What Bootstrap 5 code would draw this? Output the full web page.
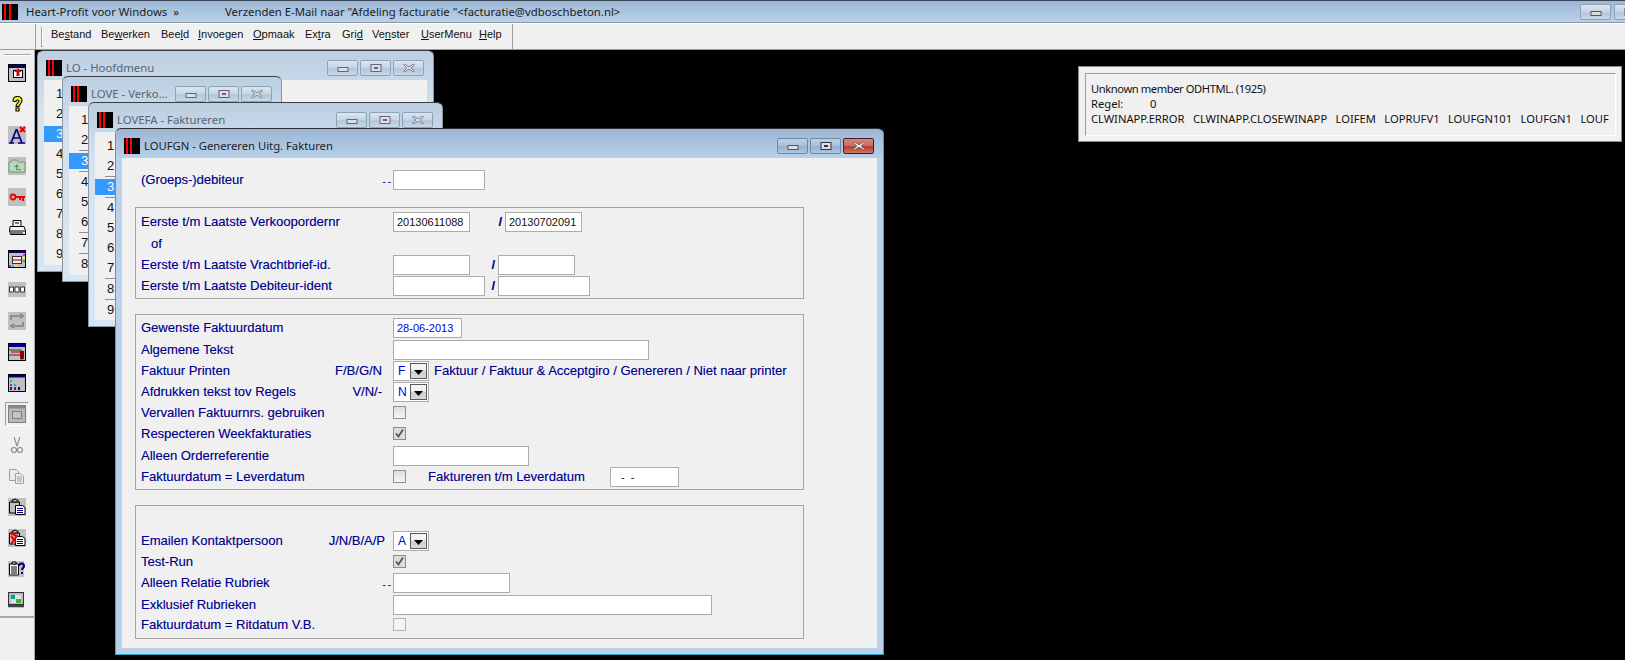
<!DOCTYPE html>
<html lang="nl">
<head>
<meta charset="utf-8">
<title>Heart-Profit voor Windows</title>
<link href="https://cdn.jsdelivr.net/npm/bootstrap@5.3.0/dist/css/bootstrap.min.css" rel="stylesheet">
<style>
html,body{height:660px;overflow:hidden;background:#000;}
body{font-family:"Liberation Sans",Arial,sans-serif;font-size:13px;line-height:20px;color:#00008f;}
.form-wrap{text-shadow:.3px 0 0 rgba(0,0,140,.35);}
.ui-seg{font-family:"Noto Sans","Open Sans",sans-serif;}
.app-bar{height:23px;background:linear-gradient(#9db8d6,#b9d1ea);border-top:1px solid #3c4654;border-bottom:1px solid #8c9aa8;color:#1c1c1c;font-size:11.35px;}
.app-logo{width:16px;height:16px;margin-left:2px;flex:none;}
.app-name{margin-left:8px;width:199px;white-space:nowrap;}
.app-btn{width:30px;height:17px;margin-right:3px;flex:none;}
.app-btn.cut{margin-right:-20px;}
.menu-row{height:27px;background:#f0f0f0;border-top:1px solid #fff;border-bottom:1px solid #9a9a9a;}
.menu-box{margin-left:35px;width:478px;border-left:1px solid #a0a0a0;border-right:1px solid #a0a0a0;padding-left:5px;}
.menu-grip{width:2px;height:20px;margin-top:3px;border-left:1px solid #a0a0a0;border-bottom:1px solid #a0a0a0;background:#fff;flex:none;}
.menu-grid{display:grid;grid-template-columns:50px 60px 37px 55px 52px 37px 30px 49px 58px 30px;margin-left:8px;color:#111;font-size:11px;line-height:20px;}
.work{height:610px;}
.tool{width:35px;background:#f0f0f0;border-right:1px solid #a8a8a8;height:610px;flex:none;}
.tool-in{height:568px;border-bottom:2px solid #a8a8a8;padding-top:4px;}
.tool-grip{height:2px;margin:0 3px 1px 4px;border-top:1px solid #a8a8a8;background:#fff;}
.tool-slot{height:31px;display:flex;align-items:center;padding-left:8px;}
.tool-slot svg{width:18px;height:18px;display:block;}
.tool-slot.pressed{padding-left:5px;}
.press{width:24px;height:24px;border:1px solid #9a9a9a;border-right-color:#fff;border-bottom-color:#fff;padding:2px;}
.desk{position:relative;flex-grow:1;background:#000;}
.mdi{position:absolute;display:flex;flex-direction:column;border:1px solid #8b96a3;border-top-color:#3a3f46;border-radius:6px 6px 0 0;background:linear-gradient(#bccee1 0,#d5e3f1 60px,#d8e5f2);padding:0 6px 6px;}
.mdi-lo{left:2px;top:0;width:397px;height:222px;}
.mdi-love{left:27px;top:26px;width:220px;height:206px;}
.mdi-fa{left:53px;top:52px;width:355px;height:225px;}
.mdi-gn{left:80px;top:78px;width:769px;height:527px;background:linear-gradient(#9cb7d4 0,#b9d1ea 30px,#b9d1ea);border-color:#6f8fae;border-top-color:#2c2f33;border-bottom-color:#2fa6c0;}
.mdi-head{height:29px;padding-top:5px;display:flex;align-items:center;flex:none;}
.mdi-logo{width:16px;height:16px;margin-left:2px;flex:none;}
.mdi-title{margin-left:4px;color:#566474;font-size:11.35px;white-space:nowrap;overflow:hidden;}
.mdi-gn .mdi-title{color:#1c1c1c;font-size:11.25px;}
.caps{margin-left:auto;display:flex;gap:2px;flex:none;margin-right:3px;}
.cap{width:31px;height:16px;border:1px solid #8ea3b8;border-radius:2px;background:linear-gradient(#dbe6f1 0,#c4d4e4 50%,#b2c6da 55%,#c8d8e8);display:flex;align-items:center;justify-content:center;}
.cap svg{width:14px;height:10px;display:block;}
.mdi-gn .cap{border-color:#6d88a6;background:linear-gradient(#bcd0e4 0,#a8c0da 50%,#94b0cf 55%,#aec8e2);}
.mdi-gn .cap.cl{border-color:#4a1a22;background:linear-gradient(#d6897d 0,#c8695c 50%,#b23a2c 55%,#d0766a);}
.pane{background:#f0f0f0;flex-grow:1;min-height:0;overflow:hidden;}
.pick{padding-top:4px;color:#111;}
.pick-row{height:20px;padding-left:12px;line-height:20px;}
.pick-row.sep{height:21px;background:linear-gradient(#8f8f8f,#8f8f8f) no-repeat 10px 100%/100% 1px;}
.pick-row.on{padding-left:0;display:flex;align-items:center;}
.pick-row.on span{display:block;width:100%;height:16px;line-height:16px;padding-left:12px;background:#3399ff;color:#fff;}
.pick-row.on.sep{align-items:flex-start;padding-top:2px;}
.form-wrap{padding:12px 0 0 13px;}
.fr{display:flex;align-items:flex-start;white-space:nowrap;}
.rh-20{height:20px;}.rh-21{height:21px;}.rh-22{height:22px;}.rh-23{height:23px;}
.lab{flex:0 0 252px;display:flex;padding-right:11px;}
.lab.wide{padding-right:8px;}
.lab.dots{padding-right:0;}
.lab.of{padding-left:10px;line-height:24px;}
.dotty{margin-left:auto;letter-spacing:2px;line-height:24px;font-size:10px;color:#4000a0;}
.grp{width:669px;border:1px solid #a4a4a4;padding-left:5px;}
.g1{margin:17px 0 15px;padding-top:4px;padding-bottom:2px;}
.g2{margin-bottom:15px;padding-top:3px;padding-bottom:2px;}
.g3{padding-top:25px;padding-bottom:3px;}
.top1{padding-left:6px;}
.fld.form-control{height:20px;min-height:0;padding:0 0 0 3px;border:1px solid #ababab;border-radius:0;background:#fff;font-size:11px;line-height:18px;color:#111;flex:none;width:auto;text-shadow:none;}
.w69{width:69px!important}.w77{width:77px!important}.w92{width:92px!important}.w117{width:117px!important}.w136{width:136px!important}.w256{width:256px!important}.w319{width:319px!important}
.fld.blue{color:#0000e0;}
.fld.dash{padding-left:10px;letter-spacing:1.5px;}
.sl{font-weight:700;text-align:right;padding-right:3px;flex:none;}
.s35{width:35px}.s28{width:28px}.s13{width:13px}
.combo{width:36px;height:20px;border:1px solid #ababab;background:#fff;display:flex;flex:none;font-size:12px;line-height:18px;color:#0000e0;padding-left:4px;text-shadow:none;}
.combo span{width:12px;}
.drop{width:17px;height:16px;margin-top:1px;border:1px solid #5a5a5a;background:linear-gradient(#f6f6f6 0,#f0f0f0 45%,#cdcdcd 50%,#d8d8d8);display:flex;align-items:center;justify-content:center;}
.drop svg{width:9px;height:5px;display:block;margin-top:3px;}
.tick.form-check-input{width:13px;height:13px;margin:3px 0 0;border:1px solid #8e8f8f;border-radius:0;background-color:#e9e9e9;background-image:linear-gradient(#dcdcdc,#f6f6f6);flex:none;opacity:1;box-shadow:none;}
.tick.form-check-input:checked{background-color:#dcdcdc;background-image:url("data:image/svg+xml,%3Csvg xmlns='http://www.w3.org/2000/svg' viewBox='0 0 13 13'%3E%3Cpath d='M3 6.5l2.4 3L10 2.5' fill='none' stroke='%2346567a' stroke-width='1.8'/%3E%3C/svg%3E");background-size:13px 13px;}
.tick.form-check-input:disabled{border-color:#b4b4b4;background-color:#f4f4f4;background-image:none;opacity:1;}
.desc{margin-left:5px;}
.lab2{margin-left:22px;width:182px;}
.err{position:absolute;left:1043px;top:16px;width:544px;height:76px;background:#f0f0f0;border:1px solid #8a8a8a;padding:6px 5px 5px 6px;color:#111;}
.err-in{height:100%;border:1px solid #9f9f9f;border-right-color:#fff;border-bottom-color:#fff;padding:7px 0 0 5px;line-height:15px;font-size:11.2px;white-space:nowrap;overflow:hidden;}
.err-first{letter-spacing:-.42px;}
.err-lab{display:inline-block;width:59px;}
.err-stack{word-spacing:1.3px;}
</style>
</head>
<body>
<div class="app-bar d-flex align-items-center ui-seg">
  <svg class="app-logo" viewBox="0 0 16 16"><rect width="16" height="16" fill="#000"/><rect x="2" width="2" height="16" fill="#f00"/><rect x="7" width="2" height="16" fill="#f00"/></svg>
  <span class="app-name">Heart-Profit voor Windows &nbsp;»</span>
  <span class="flex-grow-1">Verzenden E-Mail naar "Afdeling facturatie "&lt;facturatie@vdboschbeton.nl&gt;</span>
  <div class="cap app-btn"><svg viewBox="0 0 14 10"><rect x="2" y="4.5" width="10" height="4" fill="#ddd" stroke="#555"/></svg></div>
  <div class="cap app-btn cut"><svg viewBox="0 0 14 10"><rect x="2" y="1.5" width="10" height="7" fill="#ddd" stroke="#555"/><rect x="5" y="4" width="4" height="2" fill="#555"/></svg></div>
</div>
<div class="menu-row d-flex">
  <div class="menu-box d-flex">
    <div class="menu-grip"></div>
    <div class="menu-grid">
      <span>Be<u>s</u>tand</span><span>Be<u>w</u>erken</span><span>Bee<u>l</u>d</span><span><u>I</u>nvoegen</span><span><u>O</u>pmaak</span><span>Ex<u>t</u>ra</span><span>Gri<u>d</u></span><span>Ve<u>n</u>ster</span><span><u>U</u>serMenu</span><span><u>H</u>elp</span>
    </div>
  </div>
</div>
<div class="work d-flex">
  <div class="tool">
    <div class="tool-in">
      <div class="tool-grip"></div>
      <div class="tool-slot"><svg viewBox="0 0 18 18"><rect x=".5" y=".5" width="17" height="17" fill="#c0c0c0" stroke="#000"/><rect x="1" y="1" width="16" height="3" fill="#000080"/><rect x="5.5" y="6.5" width="9" height="7" fill="#fff" stroke="#000"/><path d="M10 4.5l3.5 3.5h-2v4h-3v-4h-2z" fill="#e00000"/></svg></div>
      <div class="tool-slot"><svg viewBox="0 0 18 18"><path d="M5 6c0-6 9-6 9-.5 0 3-3 3.500-3 6H8c0-3.500 3-3.500 3-5.500 0-1.500-3-1.500-3 .5zM8 13h3v3H8z" fill="#ffff00" stroke="#000" stroke-width="1.100"/></svg></div>
      <div class="tool-slot"><svg viewBox="0 0 18 18"><rect width="18" height="18" fill="#c0c0c0"/><path d="M1 17h5M10 17h7M8.500 3L3 17M8.500 3L14 17M5 12h7" fill="none" stroke="#000080" stroke-width="1.700"/><path d="M12 1l5 5M17 1l-5 5" stroke="#e00000" stroke-width="2"/></svg></div>
      <div class="tool-slot"><svg viewBox="0 0 18 18"><rect width="18" height="18" fill="#c0c0c0"/><path d="M1 15V5h2l1-2h5l1 2h7v10z" fill="#b4dcb4" stroke="#7c8c7c"/><path d="M9 7L6 10h2v3h5v-1H9v-2h2z" fill="#708070"/></svg></div>
      <div class="tool-slot"><svg viewBox="0 0 18 18"><rect width="18" height="18" fill="#c0c0c0"/><circle cx="5" cy="9" r="2.500" fill="none" stroke="#f00000" stroke-width="1.800"/><path d="M7 8h10v2h-1v3h-2v-3h-1v2h-2v-2H7z" fill="#f00000"/></svg></div>
      <div class="tool-slot"><svg viewBox="0 0 18 18"><path d="M5 7V1.500h8V7M2 7.500h14l1.500 4v4h-15l-1-4z" fill="#f4f4f4" stroke="#000"/><path d="M1.500 12h16M3 14h12M7 4h4" stroke="#000"/></svg></div>
      <div class="tool-slot"><svg viewBox="0 0 18 18"><rect x=".5" y=".5" width="17" height="17" fill="#c0c0c0" stroke="#000"/><rect x="1" y="1" width="16" height="2" fill="#000080"/><rect x="4.500" y="6.500" width="9" height="7" fill="#f0f0f0" stroke="#333"/><path d="M5 10h8" stroke="#e00000" stroke-width="1.200"/><path d="M15 4h2v2h-2z" fill="#f0f"/><path d="M15 7h2v2h-2z" fill="#ff0"/><path d="M15 10h2v2h-2z" fill="#0c0"/><path d="M1 15h2v2H1z" fill="#f0f"/><path d="M4 15h2v2H4z" fill="#0cc"/><path d="M7 15h2v2H7z" fill="#ff0"/></svg></div>
      <div class="tool-slot"><svg viewBox="0 0 18 15" style="height:15px"><rect width="18" height="15" fill="#c0c0c0"/><path d="M1.500 5h4v5h-4zM7 5h4v5H7zM12.500 5h4v5h-4z" fill="#fff" stroke="#333"/></svg></div>
      <div class="tool-slot"><svg viewBox="0 0 18 18"><rect width="18" height="18" fill="#c0c0c0"/><path d="M3 8V4h9M12 2l3 2-3 2M15 10v4H6M6 12l-3 2 3 2" fill="none" stroke="#808080" stroke-width="1.600"/></svg></div>
      <div class="tool-slot"><svg viewBox="0 0 18 18"><rect x=".5" y=".5" width="17" height="17" fill="#c0c0c0" stroke="#000"/><rect x="1" y="1" width="16" height="3" fill="#000080"/><path d="M1 7h12v5H1" fill="none" stroke="#333"/><path d="M3 9h9" stroke="#e00000" stroke-width="1.200"/><path d="M12 8h4v7c0 2-4 2-4 0z" fill="#8c0000"/></svg></div>
      <div class="tool-slot"><svg viewBox="0 0 18 18"><rect x=".5" y=".5" width="17" height="17" fill="#c0c0c0" stroke="#000"/><rect x="1" y="1" width="16" height="2.500" fill="#000080"/><path d="M2 6h2v2H2z" fill="#00c8c8"/><path d="M2 10h2v2H2z" fill="#e000e0"/><path d="M2 13h2v3H2z" fill="#202080"/><path d="M6 10h2v2H6z" fill="#00c8c8"/><path d="M6 13h2v3H6z" fill="#a00060"/><path d="M10 13h2v3h-2z" fill="#0000a0"/></svg></div>
      <div class="tool-slot pressed"><div class="press"><svg viewBox="0 0 18 18"><rect x=".5" y=".5" width="17" height="17" fill="#b8b8b8" stroke="#808080"/><rect x="1" y="1" width="16" height="2.500" fill="#8a8a8a"/><rect x="4.500" y="6.500" width="9" height="7" fill="#c4c4c4" stroke="#808080"/></svg></div></div>
      <div class="tool-slot"><svg viewBox="0 0 18 18"><path d="M6 1l3 9M12 1L9 10" fill="none" stroke="#8c8c8c" stroke-width="1.100"/><circle cx="6" cy="14" r="2.500" fill="none" stroke="#8c8c8c" stroke-width="1.200"/><circle cx="12" cy="14" r="2.500" fill="none" stroke="#8c8c8c" stroke-width="1.200"/></svg></div>
      <div class="tool-slot"><svg viewBox="0 0 18 18"><path d="M1.500 2.500h7l2 2v9h-9z" fill="#ececec" stroke="#a0a0a0"/><path d="M7.500 6.500h5l3 3v7h-8z" fill="#ececec" stroke="#a0a0a0"/><path d="M9 10h5M9 12h5M9 14h5" stroke="#a0a0a0"/></svg></div>
      <div class="tool-slot"><svg viewBox="0 0 18 18"><rect width="18" height="18" fill="#c0c0c0"/><path d="M1.500 4h10v11h-10z" fill="none" stroke="#000"/><path d="M4 4V2h2l.5-1h1l.5 1h2v2z" fill="#c0c0c0" stroke="#000"/><path d="M7.500 7.500h7l2.500 2v7h-9.500z" fill="#fff" stroke="#000"/><path d="M9 10.500h6M9 12.500h6M9 14.500h6" stroke="#000080"/></svg></div>
      <div class="tool-slot"><svg viewBox="0 0 18 18"><rect width="18" height="18" fill="#c0c0c0"/><path d="M1.500 4h10v11h-10z" fill="none" stroke="#000"/><path d="M4 4V2h2l.5-1h1l.5 1h2v2z" fill="#c0c0c0" stroke="#000"/><path d="M7.500 7.500h7l2.500 2v7h-9.500z" fill="#fff" stroke="#000"/><path d="M9 10.500h6M9 12.500h6M9 14.500h6" stroke="#000080"/><path d="M2 4l7 3-6 8M3 7l5 6" fill="none" stroke="#f00000" stroke-width="2"/></svg></div>
      <div class="tool-slot"><svg viewBox="0 0 18 18"><rect width="16" height="16" y="1" fill="#c0c0c0"/><path d="M1.500 4h9v11h-9z" fill="#fff" stroke="#000"/><path d="M4 4V2h4v2z" fill="#fff" stroke="#000"/><path d="M3 7h6M3 9h6M3 11h6M3 13h6" stroke="#000"/><path d="M11 6c0-3.500 5-3.500 5 0 0 2-2 2-2 4M14 12v2" fill="none" stroke="#000080" stroke-width="2"/></svg></div>
      <div class="tool-slot"><svg viewBox="0 0 18 18"><rect y="1" width="16" height="16" fill="#c0c0c0"/><rect x=".5" y="1.500" width="15" height="12" fill="#bdbdbd" stroke="#333"/><rect x="3" y="4" width="10" height="8" fill="#d8e8e0"/><path d="M3 4h4v4H3z" fill="#00a0a0"/><path d="M8 8h5v4H8z" fill="#40b040"/><path d="M0 14h16v2H0z" fill="#444"/></svg></div>
    </div>
  </div>
  <div class="desk">
    <section class="mdi mdi-lo">
      <div class="mdi-head ui-seg">
        <svg class="mdi-logo" viewBox="0 0 16 16"><rect width="16" height="16" fill="#000"/><rect x="2" width="2" height="16" fill="#f00"/><rect x="6" width="2" height="16" fill="#f00"/></svg>
        <span class="mdi-title">LO - Hoofdmenu</span>
        <div class="caps"><div class="cap"><svg viewBox="0 0 14 10"><rect x="2" y="4.500" width="10" height="4" fill="#dde" stroke="#667"/></svg></div><div class="cap"><svg viewBox="0 0 14 10"><rect x="2" y="1.500" width="10" height="7" fill="#dde" stroke="#667"/><rect x="5" y="4" width="4" height="2" fill="#667"/></svg></div><div class="cap"><svg viewBox="0 0 14 10"><path d="M2.500 1L7 4l4.500-3 1 1L9 5l3.500 3-1 1L7 6 2.500 9l-1-1L5 5 1.500 2z" fill="#e8e8e8" stroke="#667" stroke-width=".8"/></svg></div></div>
      </div>
      <div class="pane pick">
        <div class="pick-row">1</div><div class="pick-row">2</div><div class="pick-row on"><span>3</span></div><div class="pick-row">4</div><div class="pick-row">5</div><div class="pick-row">6</div><div class="pick-row">7</div><div class="pick-row">8</div><div class="pick-row">9</div>
      </div>
    </section>
    <section class="mdi mdi-love">
      <div class="mdi-head ui-seg">
        <svg class="mdi-logo" viewBox="0 0 16 16"><rect width="16" height="16" fill="#000"/><rect x="2" width="2" height="16" fill="#f00"/><rect x="6" width="2" height="16" fill="#f00"/></svg>
        <span class="mdi-title">LOVE - Verko...</span>
        <div class="caps"><div class="cap"><svg viewBox="0 0 14 10"><rect x="2" y="4.500" width="10" height="4" fill="#dde" stroke="#667"/></svg></div><div class="cap"><svg viewBox="0 0 14 10"><rect x="2" y="1.500" width="10" height="7" fill="#dde" stroke="#667"/><rect x="5" y="4" width="4" height="2" fill="#667"/></svg></div><div class="cap"><svg viewBox="0 0 14 10"><path d="M2.500 1L7 4l4.500-3 1 1L9 5l3.500 3-1 1L7 6 2.500 9l-1-1L5 5 1.500 2z" fill="#e8e8e8" stroke="#667" stroke-width=".8"/></svg></div></div>
      </div>
      <div class="pane pick">
        <div class="pick-row">1</div><div class="pick-row sep">2</div><div class="pick-row on sep"><span>3</span></div><div class="pick-row">4</div><div class="pick-row">5</div><div class="pick-row sep">6</div><div class="pick-row sep">7</div><div class="pick-row">8</div>
      </div>
    </section>
    <section class="mdi mdi-fa">
      <div class="mdi-head ui-seg">
        <svg class="mdi-logo" viewBox="0 0 16 16"><rect width="16" height="16" fill="#000"/><rect x="2" width="2" height="16" fill="#f00"/><rect x="6" width="2" height="16" fill="#f00"/></svg>
        <span class="mdi-title">LOVEFA - Faktureren</span>
        <div class="caps"><div class="cap"><svg viewBox="0 0 14 10"><rect x="2" y="4.500" width="10" height="4" fill="#dde" stroke="#667"/></svg></div><div class="cap"><svg viewBox="0 0 14 10"><rect x="2" y="1.500" width="10" height="7" fill="#dde" stroke="#667"/><rect x="5" y="4" width="4" height="2" fill="#667"/></svg></div><div class="cap"><svg viewBox="0 0 14 10"><path d="M2.500 1L7 4l4.500-3 1 1L9 5l3.500 3-1 1L7 6 2.500 9l-1-1L5 5 1.500 2z" fill="#e8e8e8" stroke="#667" stroke-width=".8"/></svg></div></div>
      </div>
      <div class="pane pick">
        <div class="pick-row">1</div><div class="pick-row sep">2</div><div class="pick-row on sep"><span>3</span></div><div class="pick-row">4</div><div class="pick-row">5</div><div class="pick-row">6</div><div class="pick-row sep">7</div><div class="pick-row sep">8</div><div class="pick-row">9</div>
      </div>
    </section>
    <section class="mdi mdi-gn">
      <div class="mdi-head ui-seg">
        <svg class="mdi-logo" viewBox="0 0 16 16"><rect width="16" height="16" fill="#000"/><rect x="2" width="2" height="16" fill="#f00"/><rect x="6" width="2" height="16" fill="#f00"/></svg>
        <span class="mdi-title">LOUFGN - Genereren Uitg. Fakturen</span>
        <div class="caps"><div class="cap"><svg viewBox="0 0 14 10"><rect x="2" y="4.500" width="10" height="4" fill="#ddd" stroke="#556"/></svg></div><div class="cap"><svg viewBox="0 0 14 10"><rect x="2" y="1.500" width="10" height="7" fill="#ddd" stroke="#334"/><rect x="5" y="4" width="4" height="2" fill="#334"/></svg></div><div class="cap cl"><svg viewBox="0 0 14 10"><path d="M2.500 1L7 4l4.500-3 1 1L9 5l3.500 3-1 1L7 6 2.500 9l-1-1L5 5 1.500 2z" fill="#fff" stroke="#555" stroke-width=".8"/></svg></div></div>
      </div>
      <div class="pane form-wrap">
        <div class="fr top1 rh-20"><div class="lab dots"><span>(Groeps-)debiteur</span><span class="dotty">--</span></div><div class="fld form-control w92"></div></div>
        <div class="grp g1">
          <div class="fr rh-20"><div class="lab">Eerste t/m Laatste Verkoopordernr</div><div class="fld form-control w77">20130611088</div><span class="sl s35">/</span><div class="fld form-control w77">20130702091</div></div>
          <div class="fr rh-23"><div class="lab of">of</div></div>
          <div class="fr rh-21"><div class="lab">Eerste t/m Laatste Vrachtbrief-id.</div><div class="fld form-control w77"></div><span class="sl s28">/</span><div class="fld form-control w77"></div></div>
          <div class="fr rh-20"><div class="lab">Eerste t/m Laatste Debiteur-ident</div><div class="fld form-control w92"></div><span class="sl s13">/</span><div class="fld form-control w92"></div></div>
        </div>
        <div class="grp g2">
          <div class="fr rh-22"><div class="lab">Gewenste Faktuurdatum</div><div class="fld form-control blue w69">28-06-2013</div></div>
          <div class="fr rh-21"><div class="lab">Algemene Tekst</div><div class="fld form-control w256"></div></div>
          <div class="fr rh-21"><div class="lab"><span>Faktuur Printen</span><span class="ms-auto">F/B/G/N</span></div><div class="combo"><span>F</span><div class="drop"><svg viewBox="0 0 9 5"><path d="M0 0h9L4.500 5z" fill="#000"/></svg></div></div><span class="desc">Faktuur / Faktuur &amp; Acceptgiro / Genereren / Niet naar printer</span></div>
          <div class="fr rh-21"><div class="lab"><span>Afdrukken tekst tov Regels</span><span class="ms-auto">V/N/-</span></div><div class="combo"><span>N</span><div class="drop"><svg viewBox="0 0 9 5"><path d="M0 0h9L4.500 5z" fill="#000"/></svg></div></div></div>
          <div class="fr rh-21"><div class="lab">Vervallen Faktuurnrs. gebruiken</div><input class="tick form-check-input" type="checkbox" aria-label="Vervallen"></div>
          <div class="fr rh-22"><div class="lab">Respecteren Weekfakturaties</div><input class="tick form-check-input" type="checkbox" checked aria-label="Respecteren"></div>
          <div class="fr rh-21"><div class="lab">Alleen Orderreferentie</div><div class="fld form-control w136"></div></div>
          <div class="fr rh-20"><div class="lab">Faktuurdatum = Leverdatum</div><input class="tick form-check-input" type="checkbox" aria-label="Leverdatum"><span class="lab2">Faktureren t/m Leverdatum</span><div class="fld form-control dash w69">- -</div></div>
        </div>
        <div class="grp g3">
          <div class="fr rh-21"><div class="lab wide"><span>Emailen Kontaktpersoon</span><span class="ms-auto">J/N/B/A/P</span></div><div class="combo"><span>A</span><div class="drop"><svg viewBox="0 0 9 5"><path d="M0 0h9L4.500 5z" fill="#000"/></svg></div></div></div>
          <div class="fr rh-21"><div class="lab">Test-Run</div><input class="tick form-check-input" type="checkbox" checked aria-label="Test-Run"></div>
          <div class="fr rh-22"><div class="lab dots"><span>Alleen Relatie Rubriek</span><span class="dotty">--</span></div><div class="fld form-control w117"></div></div>
          <div class="fr rh-20"><div class="lab">Exklusief Rubrieken</div><div class="fld form-control w319"></div></div>
          <div class="fr rh-20"><div class="lab">Faktuurdatum = Ritdatum V.B.</div><input class="tick form-check-input" type="checkbox" disabled aria-label="Ritdatum"></div>
        </div>
      </div>
    </section>
    <aside class="err ui-seg">
      <div class="err-in"><span class="err-first">Unknown member ODHTML. (1925)</span><br><span class="err-lab">Regel:</span>0<br><span class="err-stack">CLWINAPP.ERROR&nbsp; CLWINAPP.CLOSEWINAPP&nbsp; LOIFEM&nbsp; LOPRUFV1&nbsp; LOUFGN101&nbsp; LOUFGN1&nbsp; LOUF</span></div>
    </aside>
  </div>
</div>
<script src="https://cdn.jsdelivr.net/npm/bootstrap@5.3.0/dist/js/bootstrap.bundle.min.js"></script>
</body>
</html>
